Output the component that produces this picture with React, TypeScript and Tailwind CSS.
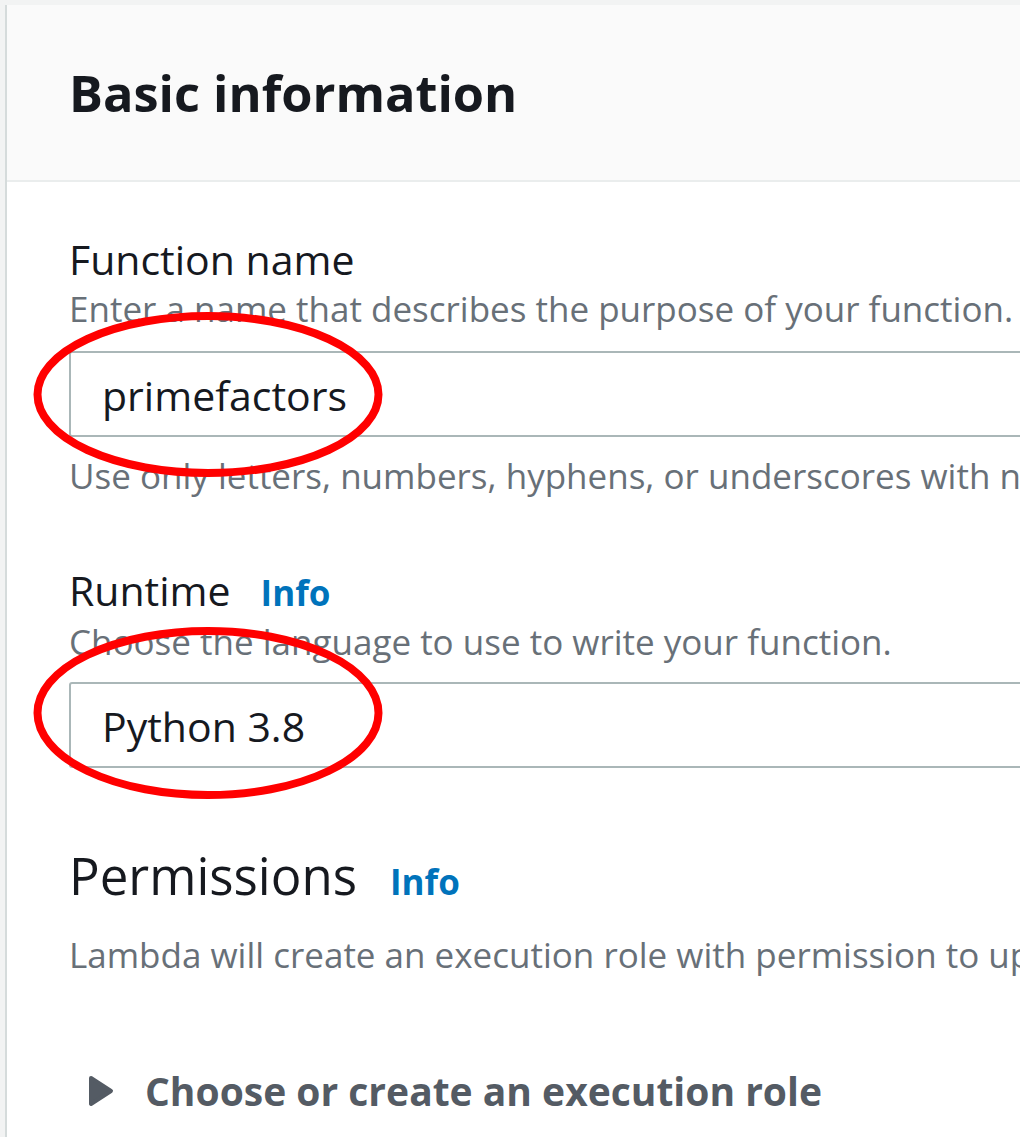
const font = { fontFamily: '"Open Sans", "Noto Sans", sans-serif' };

const Info = () => (
  <span className="font-bold text-[35px] text-[#0073bb] leading-none">Info</span>
);

const TextBox = ({ value }: { value: string }) => (
  <div className="h-[86px] w-[1100px] rounded-[3px] border-2 border-[#aab7b8] bg-white pl-[31px] pt-[18px]">
    <div className="text-[41px] leading-[48px] text-[#16191f]">{value}</div>
  </div>
);

export default function App() {
  return (
    <div className="relative h-[1137px] w-[1020px] overflow-hidden bg-[#f2f3f3] pl-[5px] pt-[5px] whitespace-nowrap" style={font}>
      <div className="h-full w-[1100px] border-l-2 border-[#d5dbdb] bg-white">
        <div className="h-[177px] border-b-2 border-[#eaeded] bg-[#fafafa] pl-[62px] pt-[58px]">
          <h2 className="text-[50.5px] font-bold leading-[60px] text-[#16191f]">Basic information</h2>
        </div>

        <div className="pl-[62px]">
          <div className="mt-[53px] text-[41px] leading-[48px] text-[#16191f]">Function name</div>
          <div className="mt-[4px] text-[35px] leading-[44px] text-[#687078]">
            Enter a name that describes the purpose of your function.
          </div>
          <div className="mt-[20px]">
            <TextBox value="primefactors" />
          </div>
          <div className="mt-[17px] text-[35px] leading-[44px] text-[#687078]">
            Use only letters, numbers, hyphens, or underscores with no spaces.
          </div>

          <div className="mt-[68px] flex items-baseline text-[41px] leading-[48px] text-[#16191f]">
            <span>Runtime</span>
            <span className="ml-[30px]">
              <Info />
            </span>
          </div>
          <div className="mt-[6px] text-[35px] leading-[44px] text-[#687078]">
            Choose the language to use to write your function.
          </div>
          <div className="mt-[18px]">
            <TextBox value="Python 3.8" />
          </div>

          <div className="mt-[77px] flex items-baseline text-[51px] leading-[60px] text-[#16191f]">
            <span>Permissions</span>
            <span className="ml-[33px]">
              <Info />
            </span>
          </div>
          <div className="mt-[28px] text-[35px] leading-[44px] text-[#687078]">
            Lambda will create an execution role with permission to upload logs to Amazon CloudWatch Logs.
          </div>

          <div className="mt-[92px] flex items-center pl-[19px]">
            <svg width="26" height="32" viewBox="0 0 26 32" className="mr-[31px] shrink-0">
              <path d="M3 3 L23 16 L3 29 Z" fill="#545b64" stroke="#545b64" strokeWidth="4" strokeLinejoin="round" />
            </svg>
            <span className="text-[39px] font-bold leading-[44px] text-[#545b64]">
              Choose or create an execution role
            </span>
          </div>
        </div>
      </div>

      <svg className="pointer-events-none absolute left-0 top-0" width="1020" height="1137">
        <ellipse cx="208" cy="394.5" rx="170.5" ry="78.5" fill="none" stroke="#ff0000" strokeWidth="8" />
        <ellipse cx="208" cy="713" rx="170.5" ry="82" fill="none" stroke="#ff0000" strokeWidth="8" />
      </svg>
    </div>
  );
}
